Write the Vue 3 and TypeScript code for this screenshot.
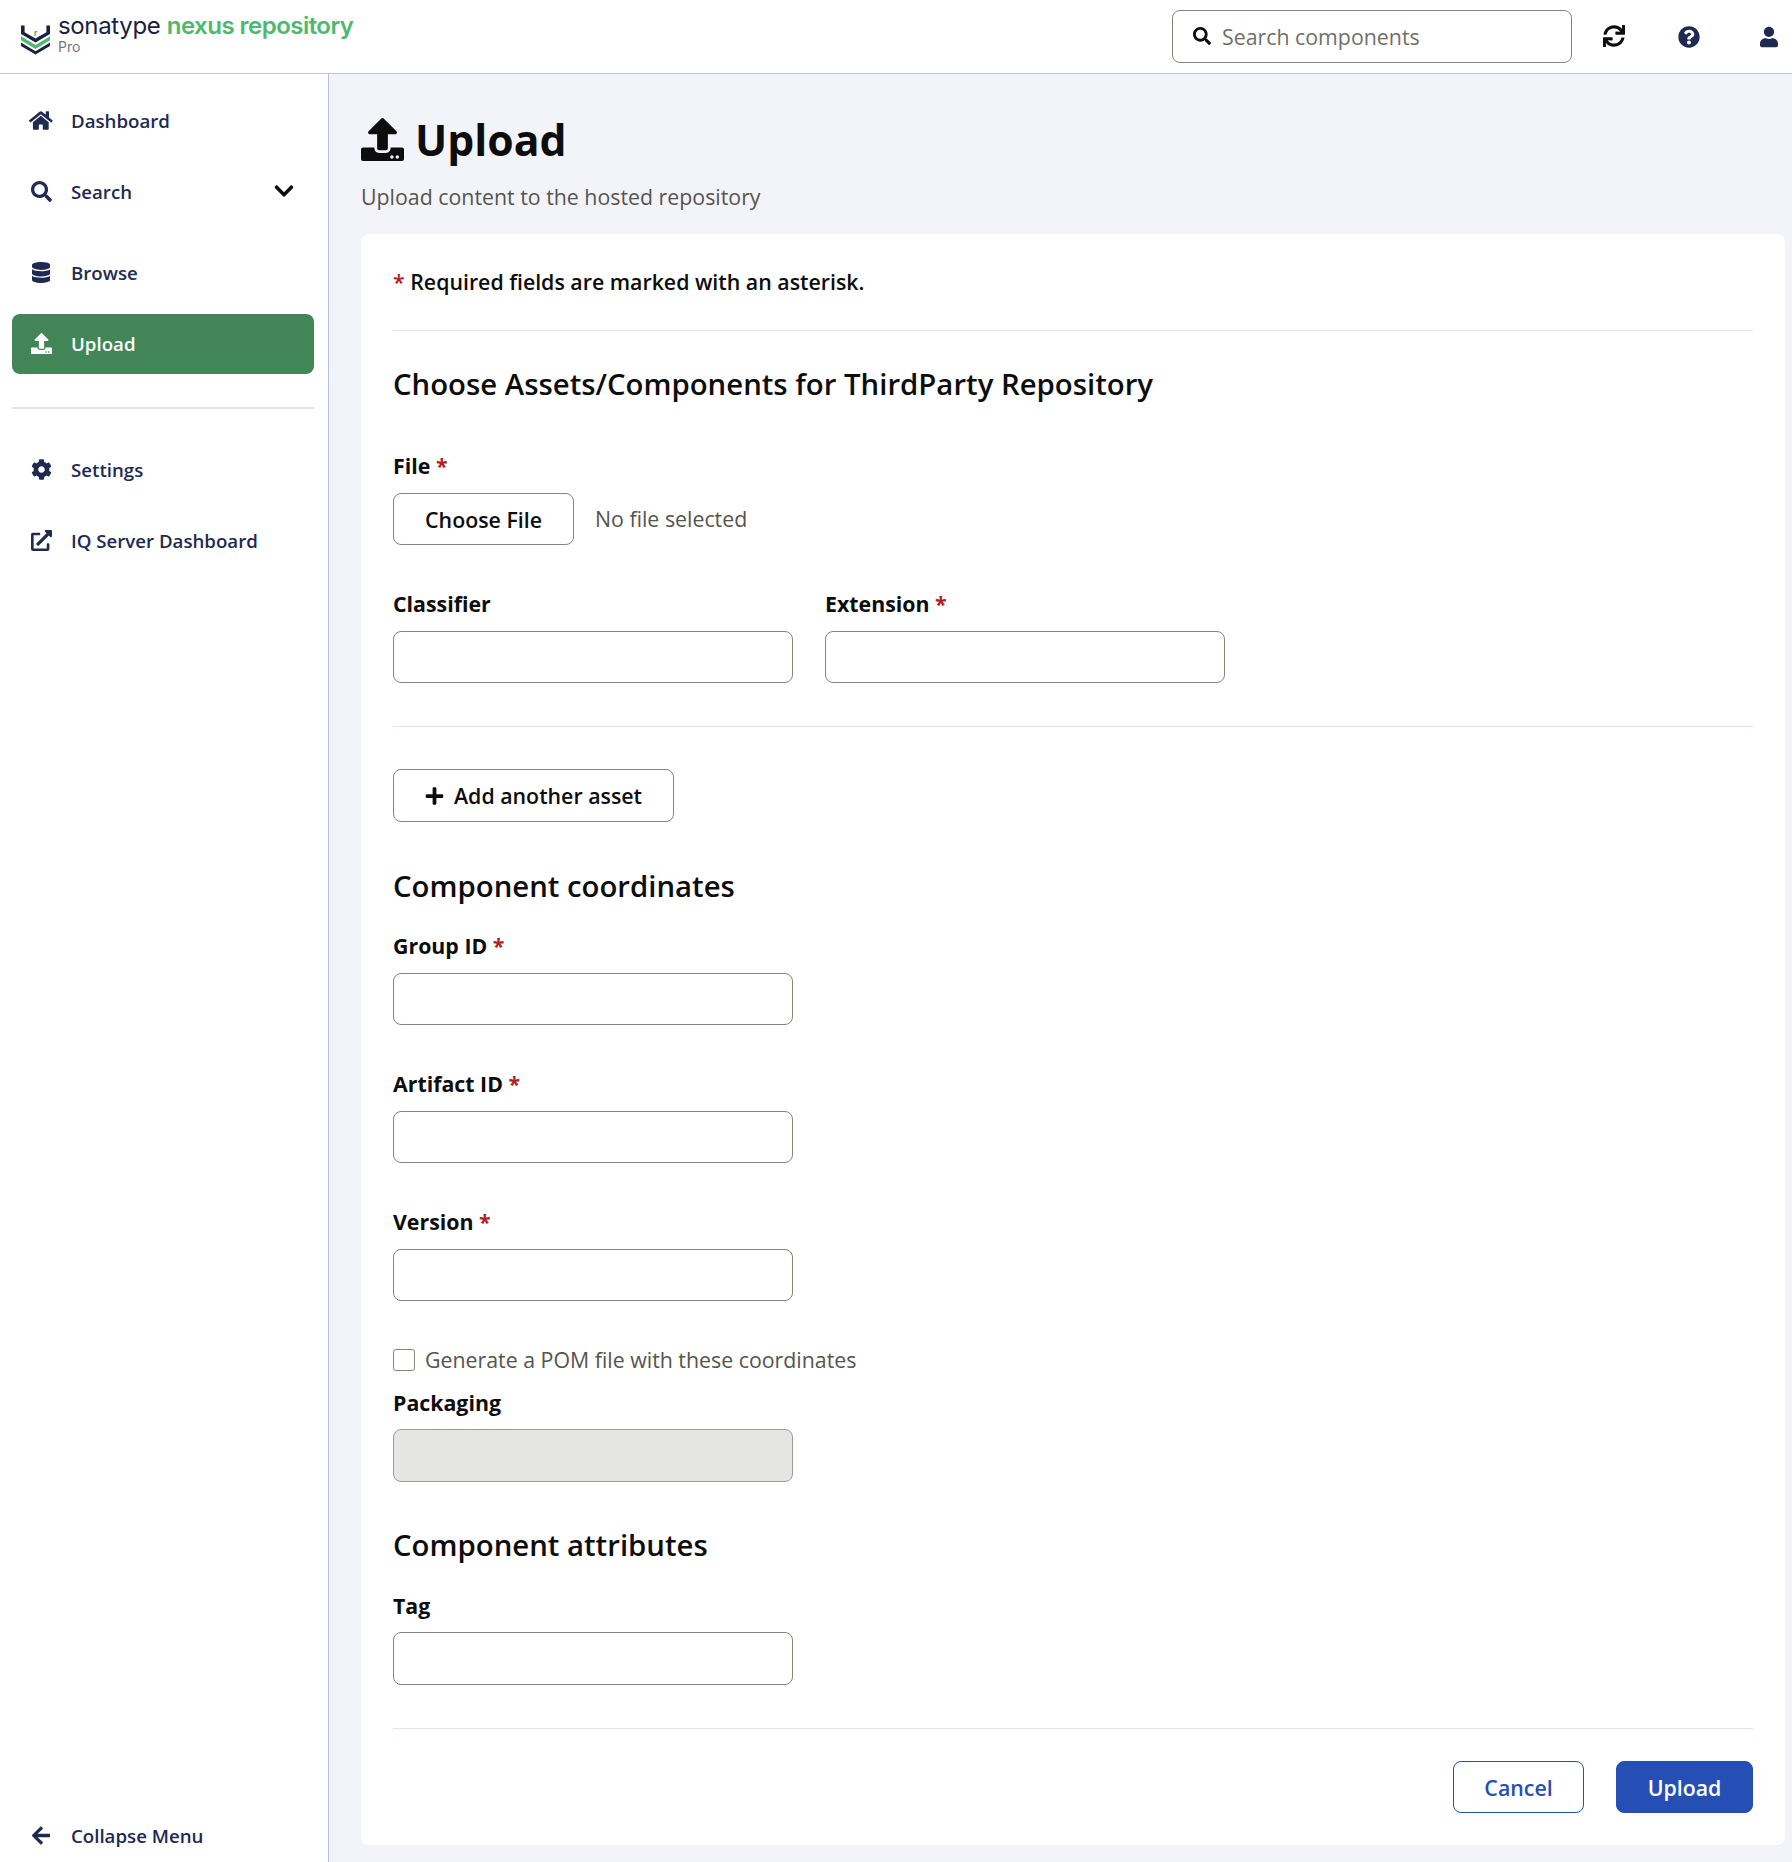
<script setup lang="ts">
interface NavItem { label: string; view: string; d: string; active?: boolean; extra?: boolean }
const icons = {
  home: { view: '0 0 576 512', d: 'M280.37 148.26L96 300.11V464a16 16 0 0 0 16 16l112.06-.29a16 16 0 0 0 15.92-16V368a16 16 0 0 1 16-16h64a16 16 0 0 1 16 16v95.64a16 16 0 0 0 16 16.05L464 480a16 16 0 0 0 16-16V300L295.67 148.26a12.19 12.19 0 0 0-15.3 0zM571.6 251.47L488 182.56V44.05a12 12 0 0 0-12-12h-56a12 12 0 0 0-12 12v72.61L318.47 43a48 48 0 0 0-61 0L4.34 251.47a12 12 0 0 0-1.6 16.9l25.5 31A12 12 0 0 0 45.15 301l235.22-193.74a12.19 12.19 0 0 1 15.3 0L530.9 301a12 12 0 0 0 16.9-1.6l25.5-31a12 12 0 0 0-1.7-16.93z' },
  search: { view: '0 0 512 512', d: 'M505 442.7L405.3 343c-4.5-4.5-10.6-7-17-7H372c27.6-35.3 44-79.7 44-128C416 93.1 322.9 0 208 0S0 93.1 0 208s93.1 208 208 208c48.3 0 92.7-16.4 128-44v16.3c0 6.4 2.5 12.5 7 17l99.7 99.7c9.4 9.4 24.6 9.4 33.9 0l28.3-28.3c9.4-9.4 9.4-24.6.1-34zM208 336c-70.7 0-128-57.2-128-128 0-70.7 57.2-128 128-128 70.7 0 128 57.2 128 128 0 70.7-57.2 128-128 128z' },
  database: { view: '0 0 448 512', d: 'M448 73.143v45.714C448 159.143 347.667 192 224 192S0 159.143 0 118.857V73.143C0 32.857 100.333 0 224 0s224 32.857 224 73.143zM448 176v102.857C448 319.143 347.667 352 224 352S0 319.143 0 278.857V176c48.125 33.143 136.208 48.572 224 48.572S399.874 209.143 448 176zm0 160v102.857C448 479.143 347.667 512 224 512S0 479.143 0 438.857V336c48.125 33.143 136.208 48.572 224 48.572S399.874 369.143 448 336z' },
  upload: { view: '0 0 512 512', d: 'M296 384h-80c-13.3 0-24-10.7-24-24V192h-87.7c-17.8 0-26.7-21.5-14.1-34.1L242.3 5.7c7.5-7.5 19.8-7.5 27.3 0l152.2 152.2c12.6 12.6 3.7 34.1-14.1 34.1H320v168c0 13.3-10.7 24-24 24zm216-8v112c0 13.3-10.7 24-24 24H24c-13.3 0-24-10.7-24-24V376c0-13.3 10.7-24 24-24h136v8c0 30.9 25.1 56 56 56h80c30.9 0 56-25.1 56-56v-8h136c13.3 0 24 10.7 24 24zm-124 88c0-11-9-20-20-20s-20 9-20 20 9 20 20 20 20-9 20-20zm64 0c0-11-9-20-20-20s-20 9-20 20 9 20 20 20 20-9 20-20z' },
  cog: { view: '0 0 512 512', d: 'M487.4 315.7l-42.6-24.6c4.3-23.2 4.3-47 0-70.2l42.6-24.6c4.9-2.8 7.1-8.6 5.5-14-11.1-35.6-30-67.8-54.7-94.6-3.8-4.1-10-5.1-14.8-2.3L380.8 110c-17.9-15.4-38.5-27.3-60.8-35.1V25.8c0-5.6-3.9-10.5-9.4-11.7-36.7-8.2-74.3-7.8-109.2 0-5.5 1.2-9.4 6.1-9.4 11.7V75c-22.2 7.9-42.8 19.8-60.8 35.1L88.7 85.5c-4.9-2.8-11-1.9-14.8 2.3-24.7 26.7-43.6 58.9-54.7 94.6-1.7 5.4.6 11.2 5.5 14L67.3 221c-4.3 23.2-4.3 47 0 70.2l-42.6 24.6c-4.9 2.8-7.1 8.6-5.5 14 11.1 35.6 30 67.8 54.7 94.6 3.8 4.1 10 5.1 14.8 2.3l42.6-24.6c17.9 15.4 38.5 27.3 60.8 35.1v49.2c0 5.6 3.9 10.5 9.4 11.7 36.7 8.2 74.3 7.8 109.2 0 5.5-1.2 9.4-6.1 9.4-11.7v-49.2c22.2-7.9 42.8-19.8 60.8-35.1l42.6 24.6c4.9 2.8 11 1.9 14.8-2.3 24.7-26.7 43.6-58.9 54.7-94.6 1.5-5.5-.7-11.3-5.6-14.1zM256 336c-44.1 0-80-35.9-80-80s35.9-80 80-80 80 35.9 80 80-35.9 80-80 80z' },
  link: { view: '0 0 512 512', d: 'M432,320H400a16,16,0,0,0-16,16V448H64V128H208a16,16,0,0,0,16-16V80a16,16,0,0,0-16-16H48A48,48,0,0,0,0,112V464a48,48,0,0,0,48,48H400a48,48,0,0,0,48-48V336A16,16,0,0,0,432,320ZM488,0h-128c-21.37,0-32.05,25.91-17,41l35.73,35.73L135,320.37a24,24,0,0,0,0,34L157.67,377a24,24,0,0,0,34,0L435.28,133.32,471,169c15,15,41,4.5,41-17V24A24,24,0,0,0,488,0Z' },
  left: { view: '0 0 448 512', d: 'M257.5 445.1l-22.2 22.2c-9.4 9.4-24.6 9.4-33.9 0L7 273c-9.4-9.4-9.4-24.6 0-33.9L201.4 44.7c9.4-9.4 24.6-9.4 33.9 0l22.2 22.2c9.5 9.5 9.3 25-.4 34.3L136.6 216H424c13.3 0 24 10.7 24 24v32c0 13.3-10.7 24-24 24H136.6l120.5 114.8c9.8 9.3 10 24.8.4 34.3z' },
  chevron: { view: '0 0 448 512', d: 'M207.029 381.476L12.686 187.132c-9.373-9.373-9.373-24.569 0-33.941l22.667-22.667c9.357-9.357 24.522-9.375 33.901-.04L224 284.505l154.745-154.021c9.379-9.335 24.544-9.317 33.901.04l22.667 22.667c9.373 9.373 9.373 24.569 0 33.941L240.971 381.476c-9.373 9.372-24.569 9.372-33.942 0z' },
  sync: { view: '0 0 512 512', d: 'M440.65 12.57l4 82.77A247.16 247.16 0 0 0 255.83 8C134.73 8 33.91 94.92 12.29 209.82A12 12 0 0 0 24.09 224h49.05a12 12 0 0 0 11.67-9.26 175.91 175.91 0 0 1 317-56.94l-101.46-4.86a12 12 0 0 0-12.57 12v47.41a12 12 0 0 0 12 12H500a12 12 0 0 0 12-12V12a12 12 0 0 0-12-12h-47.37a12 12 0 0 0-11.98 12.57zM255.83 432a175.61 175.61 0 0 1-146-77.8l101.8 4.87a12 12 0 0 0 12.57-12v-47.4a12 12 0 0 0-12-12H12a12 12 0 0 0-12 12V500a12 12 0 0 0 12 12h47.35a12 12 0 0 0 12-12.6l-4.15-82.57A247.17 247.17 0 0 0 255.83 504c121.11 0 221.93-86.92 243.55-201.82a12 12 0 0 0-11.8-14.18h-49.05a12 12 0 0 0-11.67 9.26A175.86 175.86 0 0 1 255.83 432z' },
  question: { view: '0 0 512 512', d: 'M504 256c0 136.997-111.043 248-248 248S8 392.997 8 256C8 119.083 119.043 8 256 8s248 111.083 248 248zM262.655 90c-54.497 0-89.255 22.957-116.549 63.758-3.536 5.286-2.353 12.415 2.715 16.258l34.699 26.31c5.205 3.947 12.621 3.008 16.665-2.122 17.864-22.658 30.113-35.797 57.303-35.797 20.429 0 45.698 13.148 45.698 32.958 0 14.976-12.363 22.667-32.534 33.976C247.128 238.528 216 254.941 216 296v4c0 6.627 5.373 12 12 12h56c6.627 0 12-5.373 12-12v-1.333c0-28.462 83.186-29.647 83.186-106.667 0-58.002-60.165-102-116.531-102zM256 338c-25.365 0-46 20.635-46 46 0 25.364 20.635 46 46 46s46-20.636 46-46c0-25.365-20.635-46-46-46z' },
  user: { view: '0 0 448 512', d: 'M224 256c70.7 0 128-57.3 128-128S294.7 0 224 0 96 57.3 96 128s57.3 128 128 128zm89.6 32h-16.7c-22.2 10.2-46.9 16-72.9 16s-50.6-5.8-72.9-16h-16.7C60.2 288 0 348.2 0 422.4V464c0 26.5 21.5 48 48 48h352c26.5 0 48-21.5 48-48v-41.6c0-74.2-60.2-134.4-134.4-134.4z' },
  plus: { view: '0 0 448 512', d: 'M416 208H272V64c0-17.67-14.33-32-32-32h-32c-17.67 0-32 14.33-32 32v144H32c-17.67 0-32 14.33-32 32v32c0 17.67 14.33 32 32 32h144v144c0 17.67 14.33 32 32 32h32c17.67 0 32-14.33 32-32V304h144c17.67 0 32-14.33 32-32v-32c0-17.67-14.33-32-32-32z' },
}
const top: NavItem[] = [
  { label: 'Dashboard', ...icons.home },
  { label: 'Search', ...icons.search, extra: true },
  { label: 'Browse', ...icons.database },
  { label: 'Upload', ...icons.upload, active: true },
]
const lower: NavItem[] = [
  { label: 'Settings', ...icons.cog },
  { label: 'IQ Server Dashboard', ...icons.link },
]
const coords = ['Group ID', 'Artifact ID', 'Version']
</script>

<template>
  <div class="app">
    <header class="topbar">
      <div class="brand">
        <svg class="logo" viewBox="0 0 30 30" aria-hidden="true">
          <path fill="#1c2140" d="M0 0.500h3.600v6.700L14.500 13.600 25.400 7.200V0.500H29V9L14.500 17.600 0 9z" />
          <path fill="#4fb86f" d="M0 11.300 14.500 19.900 29 11.300V15.300L14.500 23.900 0 15.300z" />
          <path fill="#1c2140" d="M0 17.600 14.500 26.200 29 17.600V21L14.500 29.600 0 21z" />
          <text x="14.500" y="11" text-anchor="middle" class="logo-r">r</text>
        </svg>
        <div class="brand-text">
          <div class="brand-name">sonatype <span class="brand-green">nexus repository</span></div>
          <div class="brand-edition">Pro</div>
        </div>
      </div>
      <div class="tools">
        <div class="search-box">
          <svg class="search-icon" :viewBox="icons.search.view"><path :d="icons.search.d" /></svg>
          <input class="search-input" type="text" placeholder="Search components" />
        </div>
        <svg class="tool tool-sync" :viewBox="icons.sync.view"><path :d="icons.sync.d" /></svg>
        <svg class="tool tool-help" :viewBox="icons.question.view"><path :d="icons.question.d" /></svg>
        <svg class="tool tool-user" :viewBox="icons.user.view"><path :d="icons.user.d" /></svg>
      </div>
    </header>

    <div class="body">
      <nav class="sidebar">
        <div class="nav-list">
          <a v-for="item in top" :key="item.label" class="nav-item" :class="{ active: item.active, extra: item.extra }">
            <span class="nav-icon"><svg :viewBox="item.view"><path :d="item.d" /></svg></span>
            <span class="nav-label">{{ item.label }}</span>
            <svg v-if="item.extra" class="chevron" :viewBox="icons.chevron.view"><path :d="icons.chevron.d" /></svg>
          </a>
        </div>
        <hr class="nav-divider" />
        <div class="nav-list">
          <a v-for="item in lower" :key="item.label" class="nav-item">
            <span class="nav-icon"><svg :viewBox="item.view"><path :d="item.d" /></svg></span>
            <span class="nav-label">{{ item.label }}</span>
          </a>
        </div>
        <a class="nav-item collapse">
          <span class="nav-icon"><svg :viewBox="icons.left.view"><path :d="icons.left.d" /></svg></span>
          <span class="nav-label">Collapse Menu</span>
        </a>
      </nav>

      <main class="main">
        <h1 class="page-title">
          <svg class="title-icon" :viewBox="icons.upload.view"><path :d="icons.upload.d" /></svg>
          Upload
        </h1>
        <p class="subtitle">Upload content to the hosted repository</p>

        <form class="card" @submit.prevent>
          <p class="required-note"><span class="star">*</span> Required fields are marked with an asterisk.</p>
          <hr class="rule rule-note" />
          <h2 class="section section-first">Choose Assets/Components for ThirdParty Repository</h2>

          <div class="field field-file">
            <label class="label">File <span class="star">*</span></label>
            <div class="file-row">
              <button type="button" class="btn btn-file">Choose File</button>
              <span class="muted">No file selected</span>
            </div>
          </div>

          <div class="asset-row">
            <div class="field">
              <label class="label">Classifier</label>
              <input class="input" type="text" />
            </div>
            <div class="field">
              <label class="label">Extension <span class="star">*</span></label>
              <input class="input" type="text" />
            </div>
          </div>
          <hr class="rule rule-asset" />
          <button type="button" class="btn btn-add">
            <svg class="plus" :viewBox="icons.plus.view"><path :d="icons.plus.d" /></svg>
            <span>Add another asset</span>
          </button>

          <h2 class="section section-coords">Component coordinates</h2>
          <div class="coord-list">
            <div v-for="c in coords" :key="c" class="field">
              <label class="label">{{ c }} <span class="star">*</span></label>
              <input class="input" type="text" />
            </div>
          </div>

          <label class="check-row">
            <input class="checkbox" type="checkbox" />
            <span class="muted">Generate a POM file with these coordinates</span>
          </label>
          <div class="field field-packaging">
            <label class="label">Packaging</label>
            <input class="input" type="text" disabled />
          </div>

          <h2 class="section section-attrs">Component attributes</h2>
          <div class="field field-tag">
            <label class="label">Tag</label>
            <input class="input" type="text" />
          </div>
          <hr class="rule rule-end" />
          <div class="actions">
            <button type="button" class="btn btn-cancel">Cancel</button>
            <button type="submit" class="btn btn-primary">Upload</button>
          </div>
        </form>
      </main>
    </div>
  </div>
</template>

<style>
html, body { margin: 0; background: #fff; }
</style>

<style scoped>
.app {
  width: 1792px;
  height: 1862px;
  display: flex;
  flex-direction: column;
  overflow: hidden;
  font-family: "Open Sans", "Noto Sans", sans-serif;
  color: #0d0d0d;
}
.topbar {
  flex: 0 0 74px;
  box-sizing: border-box;
  height: 74px;
  display: flex;
  justify-content: space-between;
  align-items: center;
  background: #fff;
  border-bottom: 1px solid #b9c4de;
}
.brand { display: flex; padding-left: 21px; gap: 7px; align-items: flex-start; }
.logo { width: 30px; height: 30px; margin-top: 7px; display: block; }
.logo-r { font: 700 9px "Inter", sans-serif; fill: #4fb86f; }
.brand-text { display: flex; flex-direction: column; margin-top: -7px; }
.brand-name {
  font-family: "Inter", sans-serif;
  font-size: 24px;
  line-height: 30px;
  color: #1c2140;
  letter-spacing: -0.35px;
  white-space: nowrap;
}
.brand-green { color: #4fb86f; font-weight: 600; letter-spacing: -0.53px; }
.brand-edition { font-size: 14px; line-height: 14px; margin-top: -1px; color: #777; font-family: "Inter", sans-serif; }
.tools { display: flex; align-items: center; padding-right: 14px; }
.search-box {
  box-sizing: border-box;
  width: 400px;
  height: 53px;
  display: flex;
  align-items: center;
  gap: 11px;
  padding: 0 20px;
  border: 1px solid #85857a;
  border-radius: 8px;
}
.search-icon { width: 18px; height: 18px; flex: none; fill: #0d0d0d; margin-top: -1px; }
.search-input {
  flex: 1;
  min-width: 0;
  border: 0;
  outline: 0;
  padding: 0;
  font: 400 21.33px "Open Sans", sans-serif;
  background: transparent;
}
.search-input::placeholder { color: #6f6f68; opacity: 1; }
.tool { height: 22px; width: 22px; display: block; }
.tool-sync { margin-left: 31px; margin-top: -2px; fill: #0d0d0d; }
.tool-help { margin-left: 53px; fill: #1f2a52; }
.tool-user { margin-left: 60px; width: 18px; fill: #1f2a52; }

.body { flex: 1; display: flex; min-height: 0; }
.sidebar {
  flex: 0 0 329px;
  box-sizing: border-box;
  display: flex;
  flex-direction: column;
  padding: 17px 14px 0 12px;
  background: #fff;
  border-right: 1px solid #b4c0e2;
}
.nav-list { display: flex; flex-direction: column; gap: 11px; }
.nav-item {
  box-sizing: border-box;
  height: 60px;
  display: flex;
  align-items: center;
  padding: 0 20px 2px 17px;
  border-radius: 8px;
  color: #1f2a52;
  font-size: 18.67px;
  font-weight: 600;
}
.nav-item.extra { margin-bottom: 10px; }
.nav-item.active { background: #428557; color: #fff; }
.nav-icon { width: 24px; margin-right: 18px; display: flex; justify-content: center; flex: none; }
.nav-icon svg { height: 21px; width: auto; fill: currentColor; display: block; }
.nav-label { flex: 1; white-space: nowrap; }
.chevron { width: 20px; height: 22px; fill: #0d0d0d; flex: none; }
.nav-divider { width: 100%; margin: 33px 0 31px; border: 0; border-top: 2px solid #dfe3f3; }
.collapse { margin-top: auto; height: 52px; }

.main {
  flex: 1;
  min-width: 0;
  box-sizing: border-box;
  padding: 32px 7px 17px 32px;
  background: #f3f4fa;
}
.page-title {
  display: flex;
  align-items: center;
  gap: 11px;
  height: 68px;
  margin: 0;
  font-size: 42.67px;
  font-weight: 700;
  line-height: 68px;
}
.title-icon { width: 43px; height: 43px; fill: #0d0d0d; flex: none; margin-top: -1px; }
.subtitle { margin: 8px 0 22px; font-size: 21.33px; line-height: 30px; color: #55554e; }
.card {
  box-sizing: border-box;
  height: 1611px;
  display: flex;
  flex-direction: column;
  align-items: flex-start;
  padding: 34px 32px 32px;
  background: #fff;
  border-radius: 8px;
}
.star { color: #ad2222; }
.required-note { margin: 0; font-size: 21.33px; line-height: 28px; font-weight: 600; }
.rule { width: 100%; margin: 0; border: 0; border-top: 1px solid #dfe3f3; }
.rule-note { margin-top: 34px; }
.section { margin: 0; font-size: 29.33px; line-height: 38px; font-weight: 600; }
.section-first { margin-top: 34px; }
.field { display: flex; flex-direction: column; gap: 13px; align-items: flex-start; }
.field-file { margin-top: 49px; }
.label { font-size: 21.33px; line-height: 28px; font-weight: 700; }
.file-row { display: flex; align-items: center; gap: 21px; }
.muted { font-size: 21.33px; line-height: 28px; color: #55554e; }
.btn {
  box-sizing: border-box;
  height: 52px;
  padding: 0 31px;
  border: 1px solid #85857a;
  border-radius: 8px;
  background: #fff;
  color: #0d0d0d;
  font: 600 21.33px "Open Sans", sans-serif;
}
.btn-file { width: 181px; padding: 0; }
.asset-row { display: flex; gap: 32px; margin-top: 45px; }
.input {
  box-sizing: border-box;
  width: 400px;
  height: 52px;
  padding: 0 16px;
  border: 1px solid #85857a;
  border-radius: 8px;
  background: #fff;
  outline: 0;
}
.input:disabled { background: #e5e5e3; border-color: #9c9c94; height: 53px; }
.rule-asset { margin-top: 43px; }
.btn-add {
  display: flex;
  align-items: center;
  gap: 10px;
  width: 281px;
  height: 53px;
  margin-top: 42px;
  padding-right: 0;
  white-space: nowrap;
  font-weight: 600;
}
.plus { width: 19px; height: 20px; fill: #0d0d0d; flex: none; }
.section-coords { margin-top: 45px; }
.coord-list { display: flex; flex-direction: column; gap: 45px; margin-top: 27px; }
.check-row { display: flex; align-items: center; gap: 10px; margin-top: 45px; }
.checkbox {
  appearance: none;
  box-sizing: border-box;
  width: 22px;
  height: 22px;
  margin: 0;
  border: 1px solid #85857a;
  border-radius: 3px;
  background: #fff;
}
.field-packaging { margin-top: 15px; gap: 12px; }
.section-attrs { margin-top: 44px; }
.field-tag { margin-top: 28px; gap: 12px; }
.field-tag .input { height: 53px; }
.rule-end { margin-top: 43px; }
.actions { align-self: flex-end; display: flex; gap: 32px; margin-top: 32px; }
.btn-cancel { border-color: #264fb5; color: #264fb5; width: 131px; padding: 0; }
.btn-primary { background: #264fb5; border-color: #264fb5; color: #fff; width: 137px; padding: 0; }
</style>
